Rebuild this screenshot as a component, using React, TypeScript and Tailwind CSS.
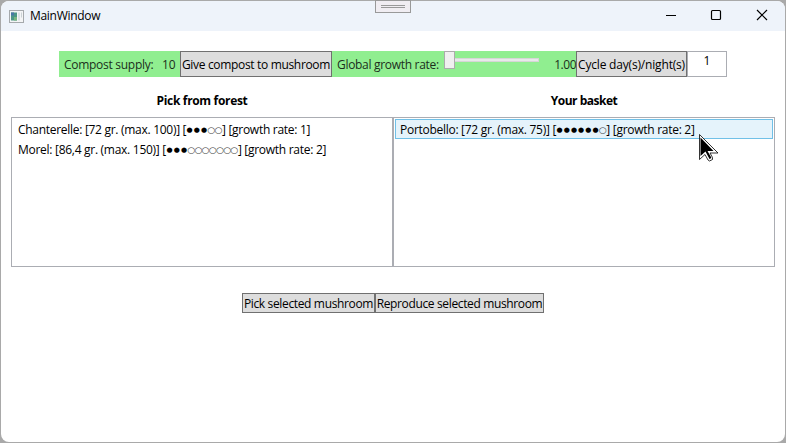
import React from "react";

function Dots({ full, empty }: { full: number; empty: number }) {
  return (
    <span className="flex h-4 items-center pt-px">
      {Array.from({ length: full + empty }, (_, i) => (
        <span
          key={i}
          className={
            "flex h-4 w-[7.2px] items-center justify-center font-['DejaVu_Sans',sans-serif] leading-4 " +
            (i < full ? "text-[7px]" : "text-[9px] text-[#444]")
          }
        >
          {i < full ? "●" : "○"}
        </span>
      ))}
    </span>
  );
}

type Mushroom = { label: string; lead: string; full: number; empty: number; rate: number; selected?: boolean };

function Row({ label, lead, full, empty, rate, selected }: Mushroom) {
  return (
    <div
      className={
        "flex h-5 items-center whitespace-nowrap border pl-1 pt-px " +
        (selected ? "border-[#70c0e7] bg-[#e5f3fb]" : "border-transparent")
      }
    >
      <span className={"shrink-0 " + lead}>{label} [</span>
      <Dots full={full} empty={empty} />
      <span className="tracking-[-0.28px]">] [growth rate: {rate}]</span>
    </div>
  );
}

const button = "flex items-center justify-center whitespace-nowrap border border-[#707070] bg-[#ddd] pt-px ";

export default function App() {
  return (
    <div className="relative h-[443px] w-[786px] overflow-hidden bg-[#a9a9a9] font-['Open_Sans','Noto_Sans',sans-serif] text-[12px] leading-4 text-black">
      <div className="ml-px mt-px h-[441px] w-[784px] overflow-hidden rounded-lg bg-white">
        <header className="flex h-[30px] items-center bg-[#eef3fa]">
          <svg className="ml-2 h-[13px] w-[15px]" viewBox="0 0 15 13">
            <rect x=".5" y=".5" width="14" height="12" fill="#f4f5f6" stroke="#a5a9ac" />
            <rect x="2" y="2.5" width="6" height="8" fill="#4c9686" />
            <path d="M2 2.5h3v3H2z" fill="#4a78a6" />
            <path d="M5 7h3v3.5H5z" fill="#79b680" />
            <rect x="9" y="2.5" width="2" height="8" fill="#dce1e4" />
            <rect x="12" y="2.5" width="1" height="5" fill="#cbd2d5" />
          </svg>
          <span className="ml-[6px] w-[80px] tracking-[-0.3px]">MainWindow</span>
          <div className="ml-auto flex h-full items-center text-black">
            <svg className="h-[30px] w-[120px]" viewBox="0 0 120 30" fill="none" stroke="currentColor">
              <path d="M1 14.5h10" />
              <rect x="46.5" y="9.5" width="9" height="9" rx="1" strokeWidth="1.2" />
              <path d="M92 9l10 10M102 9L92 19" strokeWidth="1.2" />
            </svg>
          </div>
        </header>

        <main className="px-[10px] pt-5">
          <div className="ml-[48px] flex h-[26px] w-[668px]">
            <div className="flex w-[121px] items-center bg-[#90ee90] pl-[5px] pt-px text-[#1c2f1c]">
              <span className="w-[98px] tracking-[-0.28px]">Compost supply:</span>
              <span className="tracking-[-0.2px]">10</span>
            </div>
            <button className={button + "w-[152px] tracking-[-0.33px]"}>Give compost to mushroom</button>
            <div className="flex w-[244px] bg-[#90ee90] pl-[5px] text-[#1c2f1c]">
              <span className="w-[107px] whitespace-nowrap pt-[6px] tracking-[-0.3px]">Global growth rate:</span>
              <span className="h-[18px] w-[11px] border border-[#acacac] bg-[#f0f0f0]" />
              <span className="mt-[7px] h-1 w-[84px] border border-l-0 border-[#d6d6d6] bg-[#e7eaea]" />
              <span className="ml-auto pt-[6px] tracking-[-0.5px]">1.00</span>
            </div>
            <button className={button + "w-[111px] tracking-[-0.18px]"}>Cycle day(s)/night(s)</button>
            <div className="w-10 border border-[#abadb3] pt-px text-center">1</div>
          </div>

          <div className="grid h-10 grid-cols-2 pt-4 text-center font-bold">
            <span className="tracking-[-0.33px]">Pick from forest</span>
            <span className="tracking-[-0.5px]">Your basket</span>
          </div>
          <div className="grid h-[150px] grid-cols-2">
            <section className="border border-[#abadb3] p-px">
              <Row label="Chanterelle: [72 gr. (max. 100)]" lead="w-[168px] tracking-[-0.29px]" full={3} empty={2} rate={1} />
              <Row label="Morel: [86,4 gr. (max. 150)]" lead="w-[148px] tracking-[-0.28px]" full={3} empty={7} rate={2} />
            </section>
            <section className="border border-[#abadb3] p-px">
              <Row label="Portobello: [72 gr. (max. 75)]" lead="w-[156px] tracking-[-0.28px]" full={6} empty={1} rate={2} selected />
            </section>
          </div>

          <div className="ml-[231px] mt-[26px] flex h-5">
            <button className={button + "w-[133px] tracking-[-0.35px]"}>Pick selected mushroom</button>
            <button className={button + "w-[169px] tracking-[-0.36px]"}>Reproduce selected mushroom</button>
          </div>
        </main>
      </div>

      <div className="absolute left-[375px] top-0 flex h-[13px] w-[36px] flex-col items-center gap-px border border-[#999] bg-[#f0edf2] pt-1">
        <span className="h-px w-6 bg-[#999]" />
        <span className="h-px w-6 bg-[#999]" />
      </div>
      <svg className="absolute left-[698px] top-[133px] h-[32px] w-[22px]" viewBox="0 0 22 32">
        <path d="M1.5 1.5v25l5.5-5 3 5.5 1.5 1 3-1.5v-2l-2.5-4.5h8z" fill="white" stroke="black" strokeWidth=".8" />
        <path d="M2.5 4.5v18.5l5-4.5 4 7.5 2-1-4-7h6z" fill="black" />
      </svg>
    </div>
  );
}
